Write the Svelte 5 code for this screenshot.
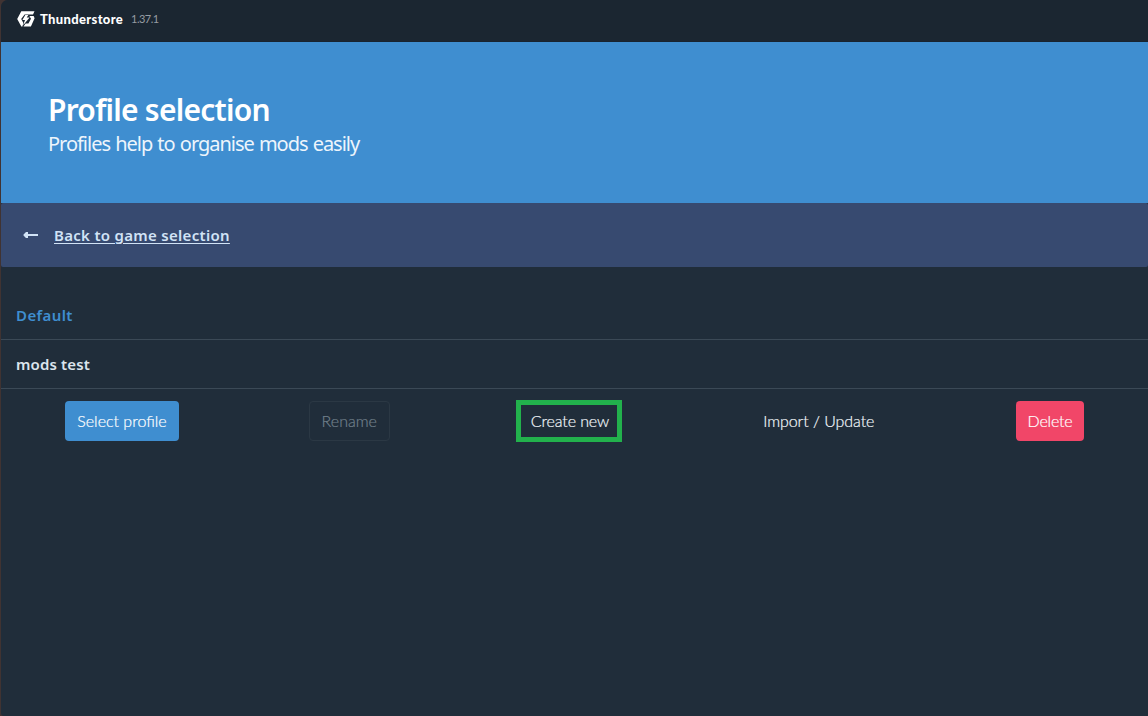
<script>
  const profiles = [
    { name: 'Default', active: true },
    { name: 'mods test', active: false }
  ];
  const actions = [
    { label: 'Select profile', kind: 'select' },
    { label: 'Rename', kind: 'rename' },
    { label: 'Create new', kind: 'create' },
    { label: 'Import / Update', kind: 'import' },
    { label: 'Delete', kind: 'delete' }
  ];
</script>

<div class="window">
  <header class="titlebar">
    <svg class="logo" width="18" height="16" viewBox="0 0 18 16">
      <path fill="#fff" d="M4.3 0.2H17.5L16 3.5H7.6L4.2 8L6.4 12L5.4 15.6H4.3L0.2 8Z" />
      <path fill="#fff" d="M12.4 5H16.6L17.6 7.2L13.9 15.6H6.5L8.6 12.4H11.4L14 7.8Z" />
      <path fill="#fff" d="M8.3 3.9H11.4L9.7 6.6H12.6L6 14.4L8 9.1H5.4Z" />
    </svg>
    <span class="brand">Thunderstore</span>
    <span class="version">1.37.1</span>
  </header>

  <section class="hero">
    <h1>Profile selection</h1>
    <p>Profiles help to organise mods easily</p>
  </section>

  <nav class="back">
    <svg width="16" height="8" viewBox="0 0 16 8">
      <path fill="#d1e3f6" d="M0.5 3.5L3 1H5V3H15V5H5V7H3L0.5 4.5Z" />
    </svg>
    <a href="#games">Back to game selection</a>
  </nav>

  <main>
    {#each profiles as profile}
      <div class="profile" class:active={profile.active}>{profile.name}</div>
    {/each}
    <div class="actions">
      {#each actions as action}
        <button class={action.kind} disabled={action.kind === 'rename'}>{action.label}</button>
      {/each}
    </div>
  </main>
</div>

<style>
  :global(body) { margin: 0; background: #403332; }
  .window {
    box-sizing: border-box;
    width: 1147px;
    height: 716px;
    margin-left: 1px;
    overflow: hidden;
    background: #202d3a;
    border-radius: 7px 0 0 3px;
    font-family: "Noto Sans", sans-serif;
  }
  .titlebar {
    display: flex;
    align-items: center;
    box-sizing: border-box;
    height: 42px;
    padding: 0 0 4px 16px;
    background: #1b2631;
    border-bottom: 1px solid #182430;
  }
  .logo { flex: none; }
  .brand {
    width: 84px;
    margin-left: 5px;
    color: #fff;
    font: 900 13px/20px Lato, sans-serif;
    letter-spacing: 0.35px;
    white-space: nowrap;
  }
  .version {
    margin-left: 7px;
    color: #969ca2;
    font: 400 11px/20px Lato, sans-serif;
    letter-spacing: -0.5px;
  }
  .hero {
    box-sizing: border-box;
    height: 161px;
    padding: 48px 47px;
    background: #3f8ed0;
    color: #fff;
  }
  h1 {
    margin: 0;
    font-size: 30px;
    font-weight: 600;
    line-height: 40px;
    letter-spacing: -0.75px;
  }
  .hero p {
    margin: 0;
    color: #edf5fc;
    font-size: 20px;
    line-height: 28px;
    letter-spacing: -1.02px;
    word-spacing: 1px;
  }
  .back {
    display: flex;
    align-items: center;
    box-sizing: border-box;
    height: 64px;
    padding-left: 22px;
    background: #374a70;
    border-radius: 2px;
  }
  .back a {
    margin-left: 15px;
    color: #d1e3f6;
    font-size: 15px;
    font-weight: 600;
    letter-spacing: 0.3px;
    text-decoration: underline;
    text-decoration-thickness: 1px;
    text-underline-offset: 2px;
  }
  main { padding-top: 24px; }
  .profile {
    box-sizing: border-box;
    height: 49px;
    padding: 12px 15px;
    border-bottom: 1px solid #3b4956;
    color: #dce5ed;
    font-size: 15px;
    font-weight: 600;
    line-height: 24px;
    letter-spacing: 0.15px;
  }
  .active { color: #3f8ed0; letter-spacing: 0.4px; }
  .actions {
    display: flex;
    align-items: center;
    justify-content: space-between;
    padding: 12px 64px 0;
  }
  button {
    box-sizing: border-box;
    height: 40px;
    padding: 0;
    border: 1px solid transparent;
    border-radius: 4px;
    background: transparent;
    color: #f2f7fb;
    font: 300 16px/38px Lato, sans-serif;
    white-space: nowrap;
    -webkit-text-stroke: 0.2px currentColor;
  }
  .select { width: 114px; background: #3f8ed0; color: #fff; }
  .rename { width: 81px; border-color: #2b3844; color: #71808b; }
  .create {
    width: 106px;
    height: 42px;
    margin: -1px 0 -1px -4px;
    padding-left: 3px;
    border: 5px solid #22b14c;
    border-radius: 0;
    line-height: 32px;
    letter-spacing: -0.1px;
  }
  .import { width: 135px; letter-spacing: -0.05px; }
  .delete { width: 68px; background: #f14668; color: #fff; letter-spacing: -0.2px; }
</style>
